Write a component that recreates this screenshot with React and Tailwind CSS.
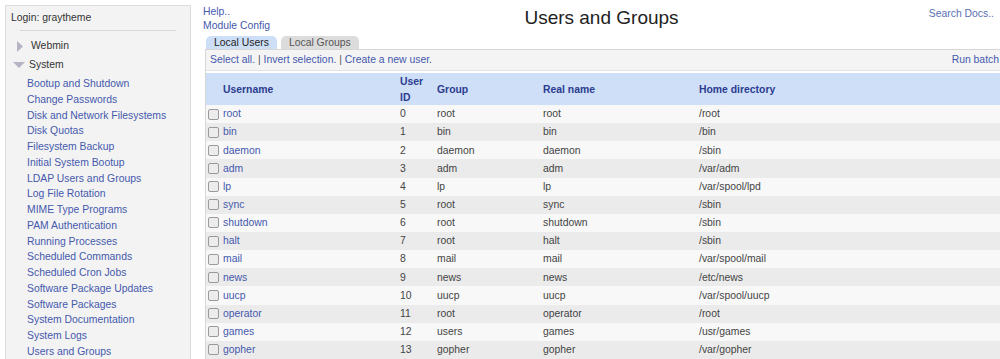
// Webmin gray theme - Users and Groups module page
const sysLinks = [
  'Bootup and Shutdown',
  'Change Passwords',
  'Disk and Network Filesystems',
  'Disk Quotas',
  'Filesystem Backup',
  'Initial System Bootup',
  'LDAP Users and Groups',
  'Log File Rotation',
  'MIME Type Programs',
  'PAM Authentication',
  'Running Processes',
  'Scheduled Commands',
  'Scheduled Cron Jobs',
  'Software Package Updates',
  'Software Packages',
  'System Documentation',
  'System Logs',
  'Users and Groups',
];

const users = [
  ['root', 0, 'root', 'root', '/root'],
  ['bin', 1, 'bin', 'bin', '/bin'],
  ['daemon', 2, 'daemon', 'daemon', '/sbin'],
  ['adm', 3, 'adm', 'adm', '/var/adm'],
  ['lp', 4, 'lp', 'lp', '/var/spool/lpd'],
  ['sync', 5, 'root', 'sync', '/sbin'],
  ['shutdown', 6, 'root', 'shutdown', '/sbin'],
  ['halt', 7, 'root', 'halt', '/sbin'],
  ['mail', 8, 'mail', 'mail', '/var/spool/mail'],
  ['news', 9, 'news', 'news', '/etc/news'],
  ['uucp', 10, 'uucp', 'uucp', '/var/spool/uucp'],
  ['operator', 11, 'root', 'operator', '/root'],
  ['games', 12, 'users', 'games', '/usr/games'],
  ['gopher', 13, 'gopher', 'gopher', '/var/gopher'],
];

const cols = 'grid grid-cols-[194px_32px_106px_156px_1fr]';

function Sidebar() {
  return (
    <div className="ml-[5px] mt-[5px] w-[186px] h-[400px] shrink-0 border border-[#dcdcdc] bg-[#f3f3f3]">
      <div className="px-[5px] pt-[5px] leading-[14px] text-[#333]">Login: graytheme</div>
      <div className="mx-[14px] mt-[5px] border-t border-[#d8d8d8]" />
      <div className="mt-[7px] flex items-center h-[16px] pl-[10px] text-[#333]">
        <svg width="8" height="11" viewBox="0 0 8 11" className="mr-[7px]">
          <polygon points="1,0 7,5.5 1,11" fill="#b4b4c4" />
        </svg>
        <span>Webmin</span>
      </div>
      <div className="mt-[3px] flex items-center h-[16px] pl-[7px] text-[#333]">
        <svg width="12" height="7" viewBox="0 0 12 7" className="mr-[4px]">
          <polygon points="0,0 12,0 6,6" fill="#b4b4c4" />
        </svg>
        <span>System</span>
      </div>
      <div className="mt-[3px] pl-[21px]">
        {sysLinks.map(l => (
          <div key={l} className="h-[15.75px] leading-[15.75px] text-[#4559ad] whitespace-nowrap">{l}</div>
        ))}
      </div>
    </div>
  );
}

function Checkbox() {
  return <span className="inline-block w-[11px] h-[11px] rounded-[2px] border border-[#9a9a9a] bg-[#ececec] mr-[4px] align-middle" />;
}

export default function App() {
  return (
    <div className="w-[1000px] h-[359px] overflow-hidden bg-white flex text-[10.4px] font-['Liberation_Sans',Arial,sans-serif]">
      <Sidebar />

      <div className="ml-[12px] flex-1 min-w-0">
        {/* top links and title */}
        <div className="flex items-start h-[32px] pt-[3px]">
          <div className="w-[120px] pt-[2px] leading-[14px] text-[#4559ad]">
            <div>Help..</div>
            <div>Module Config</div>
          </div>
          <div className="flex-1 text-center text-[19px] leading-[20px] pt-[5px] text-[#222]">Users and Groups</div>
          <div className="w-[120px] text-right pr-[6px] pt-[3px] text-[#5a6fb3]">Search Docs..</div>
        </div>

        {/* tabs */}
        <div className="flex items-end h-[13px] pl-[3px] gap-[4px] mt-[4px]">
          <div className="h-[13px] leading-[13px] px-[8px] rounded-t-[5px] bg-[#cddff6] text-[#222]">Local Users</div>
          <div className="h-[13px] leading-[13px] px-[8px] rounded-t-[5px] bg-[#dcdcdc] text-[#555]">Local Groups</div>
        </div>

        {/* panel */}
        <div className="ml-[2px] border-l border-t border-[#d6d6d6]">
          <div className="flex items-center justify-between h-[21px] bg-[#f4f4f4] px-[4px] text-[#4559ad] border-b border-[#e4e4e4]">
            <span>
              Select all. <span className="text-[#555]">|</span> Invert selection. <span className="text-[#555]">|</span> Create a new user.
            </span>
            <span className="-mr-[3px]">Run batch</span>
          </div>
          <div className="h-[2px] bg-white" />

          <div className={`${cols} h-[32px] bg-[#cfdff8] font-bold text-[#2b3c8f] items-center`}>
            <div className="pl-[17px]">Username</div>
            <div className="leading-[16px] pt-[1px]">User<br />ID</div>
            <div className="pl-[5px]">Group</div>
            <div className="pl-[5px]">Real name</div>
            <div className="pl-[5px]">Home directory</div>
          </div>

          {users.map(([name, id, group, real, home], i) => (
            <div
              key={name}
              className={`${cols} h-[18.15px] items-center text-[#444] ${i % 2 === 0 ? 'bg-[#f8f8f8]' : 'bg-[#ebebeb]'}`}
            >
              <div className="pl-[2px] flex items-center">
                <Checkbox />
                <span className="text-[#4559ad]">{name}</span>
              </div>
              <div>{id}</div>
              <div className="pl-[5px]">{group}</div>
              <div className="pl-[5px]">{real}</div>
              <div className="pl-[5px]">{home}</div>
            </div>
          ))}
        </div>
      </div>
    </div>
  );
}
